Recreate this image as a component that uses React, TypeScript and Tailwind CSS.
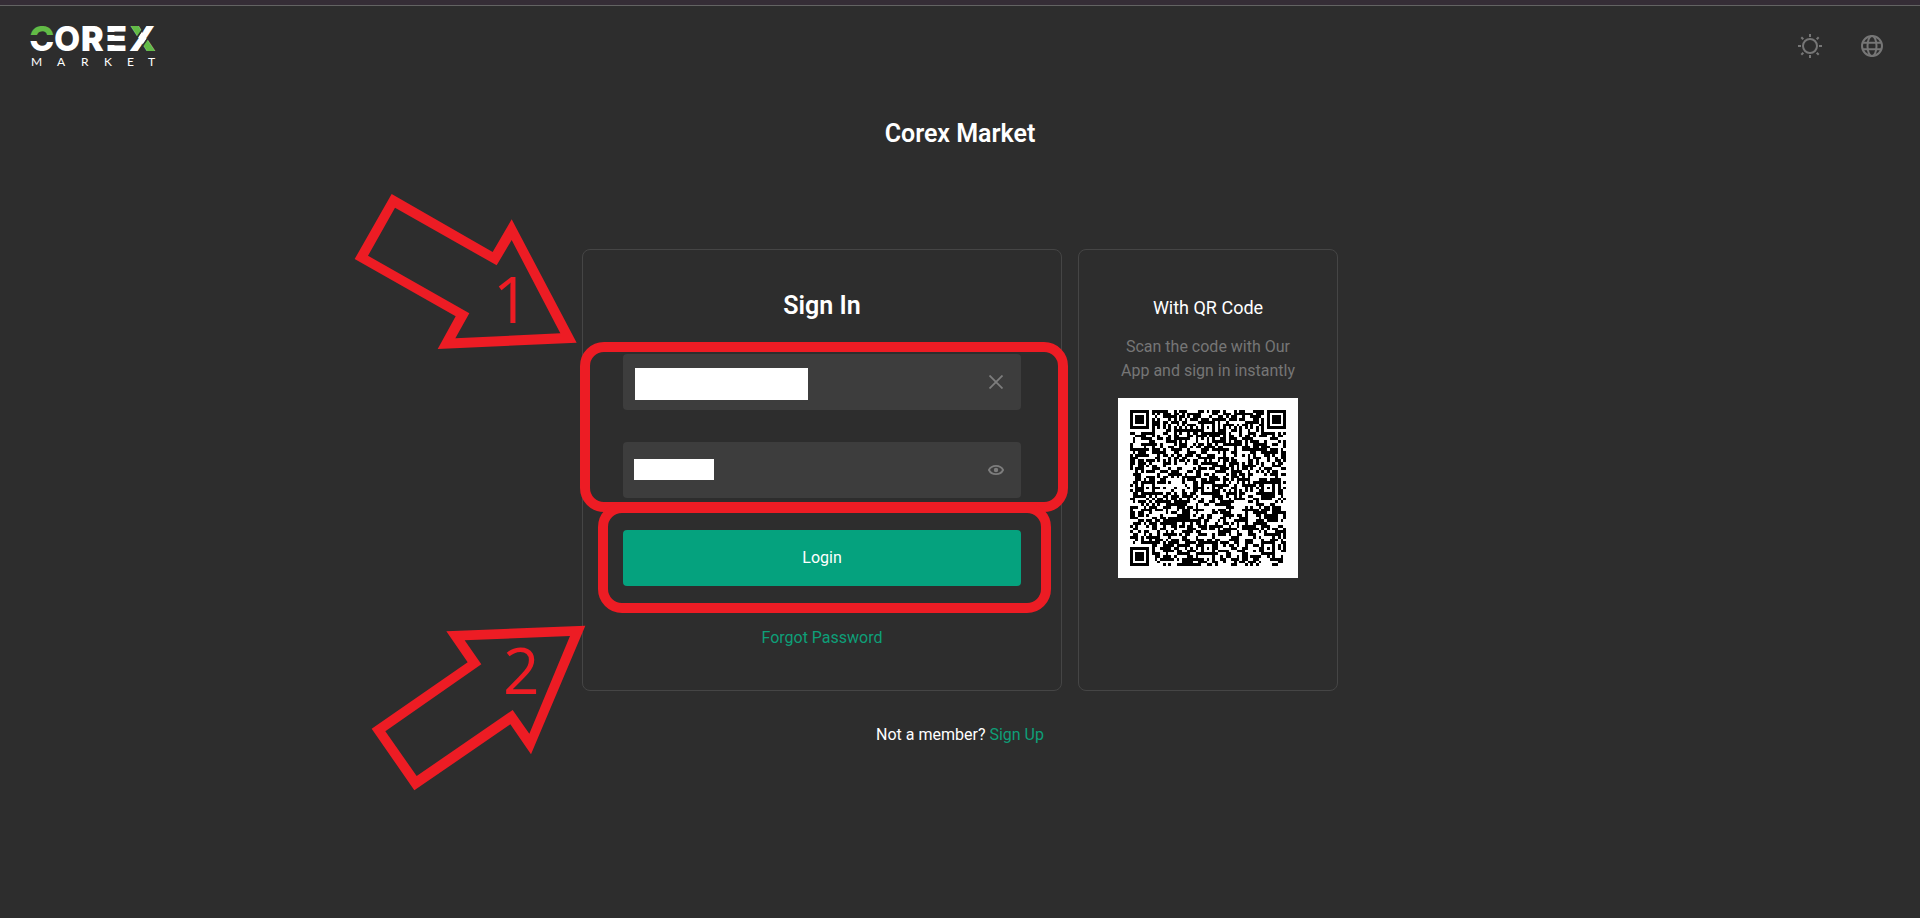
const QR_SIZE = 57;
const ALIGNMENT = [6, 28, 50];

function isFinder(x: number, y: number) {
  const near = (v: number) => v < 8;
  const far = (v: number) => v >= QR_SIZE - 8;
  return (near(x) && near(y)) || (far(x) && near(y)) || (near(x) && far(y));
}

function finderModule(x: number, y: number) {
  const cx = x < 8 ? 3 : QR_SIZE - 4;
  const cy = y < 8 ? 3 : QR_SIZE - 4;
  const d = Math.max(Math.abs(x - cx), Math.abs(y - cy));
  return d === 3 || d < 2;
}

function buildQrPath() {
  let seed = 20713;
  let path = "";
  for (let y = 0; y < QR_SIZE; y++) {
    for (let x = 0; x < QR_SIZE; x++) {
      seed = (seed * 1103515245 + 12345) % 2147483648;
      let dark = seed / 2147483648 < 0.52;
      const ax = ALIGNMENT.find((a) => Math.abs(a - x) <= 2);
      const ay = ALIGNMENT.find((a) => Math.abs(a - y) <= 2);
      if (isFinder(x, y)) {
        dark = finderModule(x, y);
      } else if (ax !== undefined && ay !== undefined) {
        dark = Math.max(Math.abs(x - ax), Math.abs(y - ay)) !== 1;
      } else if (x === 6 || y === 6) {
        dark = (x + y) % 2 === 0;
      }
      if (dark) path += `M${x} ${y}h1v1h-1z`;
    }
  }
  return path;
}

const qrPath = buildQrPath();

function QrCode() {
  return (
    <div className="mt-[15px] bg-white p-3">
      <svg
        viewBox="0 0 57 57"
        className="size-[156px]"
        shapeRendering="crispEdges"
        role="img"
        aria-label="QR code"
      >
        <path d={qrPath} fill="#000" />
      </svg>
    </div>
  );
}

function Logo() {
  return (
    <svg
      viewBox="-2 -10 132 62"
      className="h-[62px] w-[132px]"
      role="img"
      aria-label="Corex Market"
    >
      <defs>
        <linearGradient id="logo-c" gradientUnits="userSpaceOnUse" x1="0" y1="0" x2="0" y2="26">
          <stop offset="0.4" stopColor="#62bb46" />
          <stop offset="0.4" stopColor="#2d2d2d" />
          <stop offset="0.62" stopColor="#2d2d2d" />
          <stop offset="0.62" stopColor="#fff" />
        </linearGradient>
        <clipPath id="logo-x">
          <path d="M94 0h21l-9 14h-12zM129 27h-21l8-14h13z" />
        </clipPath>
      </defs>
      <g fontFamily="Inter, sans-serif" fontWeight="900" fontSize="34">
        <text y="26" fill="#fff">
          <tspan x="-2" fontWeight="800" fill="url(#logo-c)">C</tspan>
          <tspan x="23" fontWeight="800">O</tspan>
          <tspan x="50">R</tspan>
          <tspan x="75">E</tspan>
          <tspan x="98">X</tspan>
        </text>
        <text x="98" y="26" fill="#62bb46" clipPath="url(#logo-x)">
          X
        </text>
      </g>
      <path d="M75 7h10v3h-10zM75 16h10v4h-10z" fill="#2d2d2d" />
      <path d="M114 1l-9 13M117 13l-9 13" stroke="#2d2d2d" strokeWidth="1.5" />
      <text
        x="0 26 50 73 96 117"
        y="41"
        fill="#fff"
        fontFamily="Lato, sans-serif"
        fontSize="12"
      >
        MARKET
      </text>
    </svg>
  );
}

function SunIcon() {
  return (
    <svg viewBox="0 0 24 24" className="size-6" fill="none" stroke="currentColor" strokeWidth="2">
      <circle cx="12" cy="12" r="7" />
      <path d="M12 0v3M12 21v3M0 12h3M21 12h3M3.3 3.3l2 2M18.7 18.7l2 2M3.3 20.7l2-2M18.7 5.3l2-2" />
    </svg>
  );
}

function GlobeIcon() {
  return (
    <svg viewBox="0 0 24 24" className="size-6" fill="none" stroke="currentColor" strokeWidth="2">
      <circle cx="12" cy="12" r="10" />
      <ellipse cx="12" cy="12" rx="4.5" ry="10" />
      <path d="M2.6 8.8h18.8M2.6 15.2h18.8" />
    </svg>
  );
}

function CloseIcon() {
  return (
    <svg viewBox="0 0 14 14" className="size-[14px]" stroke="currentColor" strokeWidth="1.8">
      <path d="M0.5 0.5l13 13M13.5 0.5l-13 13" />
    </svg>
  );
}

function EyeIcon() {
  return (
    <svg viewBox="0 0 16 10" className="h-[10px] w-4" fill="none">
      <path
        d="M0.9 5C2.2 2.4 4.8 0.9 8 0.9S13.8 2.4 15.1 5C13.8 7.6 11.2 9.1 8 9.1S2.2 7.6 0.9 5z"
        stroke="currentColor"
        strokeWidth="1.8"
      />
      <circle cx="8" cy="5" r="2.2" fill="currentColor" />
    </svg>
  );
}

function Markers() {
  return (
    <>
      <div className="pointer-events-none absolute -top-[69px] -left-[242px] h-[190px] w-[280px] text-[#ed1c24]">
        <svg viewBox="0 0 840 570" className="size-full" fill="currentColor" fillRule="evenodd">
          <path d="M155 42L458 216L515 118L710 488L293 507L347 409L44 237ZM165 83L84 227L388 400L346 475L661 460L515 180L470 256Z" />
        </svg>
        <span className="absolute top-[87px] left-[153px] font-['Open_Sans',sans-serif] text-[64px] leading-[64px]">
          1
        </span>
      </div>
      <div className="pointer-events-none absolute top-[361px] -left-[232px] h-[190px] w-[260px] text-[#ed1c24]">
        <svg viewBox="0 0 780 570" className="size-full" fill="currentColor" fillRule="evenodd">
          <path d="M289 64L706 47L543 433L481 343L193 541L65 356L353 157ZM344 91L394 163L106 364L200 498L488 300L538 371L660 78Z" />
        </svg>
        <span className="absolute top-[28px] left-[153px] font-['Open_Sans',sans-serif] text-[64px] leading-[64px]">
          2
        </span>
      </div>
    </>
  );
}

export default function App() {
  return (
    <div className="min-h-screen bg-[#2d2d2d] font-[Roboto,sans-serif] text-base text-white">
      <div className="h-[6px] border-b border-[#636363] bg-[#352d36]" />
      <header className="flex h-20 items-center justify-between pr-9 pl-[29px]">
        <a href="#">
          <Logo />
        </a>
        <div className="flex gap-[38px] text-[#767676]">
          <button type="button" aria-label="Toggle theme">
            <SunIcon />
          </button>
          <button type="button" aria-label="Change language">
            <GlobeIcon />
          </button>
        </div>
      </header>

      <main className="flex flex-col items-center pt-8 pb-16">
        <h1 className="text-[25px] leading-8 font-semibold">Corex Market</h1>

        <div className="relative mt-[99px] flex gap-4">
          <section className="w-[480px] rounded-lg border border-[#454545] p-10">
            <h2 className="text-center text-[25px] leading-8 font-semibold">Sign In</h2>
            <form className="mt-8">
              <div className="relative flex flex-col gap-8">
                <div className="relative flex h-14 rounded bg-[#3d3d3d]">
                  <input
                    type="text"
                    aria-label="Email"
                    className="min-w-0 flex-1 bg-transparent pl-3 outline-none"
                  />
                  <button
                    type="button"
                    aria-label="Clear"
                    className="flex w-[50px] items-center justify-center text-[#7d7d7d]"
                  >
                    <CloseIcon />
                  </button>
                  <span className="absolute top-[14px] left-3 h-8 w-[173px] bg-white" />
                </div>
                <div className="relative flex h-14 rounded bg-[#3d3d3d]">
                  <input
                    type="password"
                    aria-label="Password"
                    className="min-w-0 flex-1 bg-transparent pl-3 outline-none"
                  />
                  <button
                    type="button"
                    aria-label="Show password"
                    className="flex w-[50px] items-center justify-center text-[#7d7d7d]"
                  >
                    <EyeIcon />
                  </button>
                  <span className="absolute top-[17px] left-[11px] h-[21px] w-20 bg-white" />
                </div>
                <div className="pointer-events-none absolute -top-3 -right-[47px] -bottom-[14px] -left-[43px] rounded-3xl border-10 border-[#ed1c24]" />
              </div>
              <div className="relative mt-8">
                <button type="submit" className="h-14 w-full rounded bg-[#05a27e]">
                  Login
                </button>
                <div className="pointer-events-none absolute -top-[27px] -right-[30px] -bottom-[27px] -left-[25px] rounded-3xl border-10 border-[#ed1c24]" />
              </div>
            </form>
            <p className="mt-10 text-center leading-6">
              <a href="#" className="text-[#0e9f78]">
                Forgot Password
              </a>
            </p>
          </section>

          <section className="flex w-[260px] flex-col items-center rounded-lg border border-[#454545] pt-10">
            <h2 className="text-[18px] leading-9">With QR Code</h2>
            <p className="mt-[9px] text-center leading-6 text-[#767676]">
              Scan the code with Our
              <br />
              App and sign in instantly
            </p>
            <QrCode />
          </section>
          <Markers />
        </div>

        <p className="mt-8 leading-6">
          Not a member?{" "}
          <a href="#" className="text-[#0e9f78]">
            Sign Up
          </a>
        </p>
      </main>
    </div>
  );
}
